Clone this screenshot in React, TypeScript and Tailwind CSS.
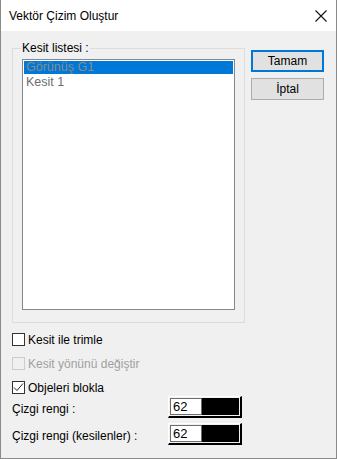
import React from "react";

export default function App() {
  // dialog rows
  const items = ["Görünüş G1", "Kesit 1"];

  const colorField = (value: string) => (
    <div className="w-[74px] h-[22px] border-t border-l border-white border-b-2 border-r-2 border-b-black border-r-black p-[1px] flex">
      <div className="w-[32px] h-full bg-white border border-[#6d6d6d] flex items-center pl-[2px] text-[13px] text-black">
        {value}
      </div>
      <div className="flex-1 h-full bg-black" />
    </div>
  );

  return (
    <div
      className="w-[337px] h-[459px] bg-[#f0f0f0] border-x border-b border-[#8a8a8a] flex flex-col text-[12px] text-black"
      style={{ fontFamily: '"Liberation Sans", Arial, sans-serif' }}
    >
      {/* title bar */}
      <div className="h-[31px] bg-white flex items-center justify-between pl-[8px] pr-[9px] shrink-0">
        <span className="text-[12px]">Vektör Çizim Oluştur</span>
        <svg width="12" height="12" viewBox="0 0 12 12">
          <path d="M0.5 0.5 L11.5 11.5 M11.5 0.5 L0.5 11.5" stroke="#111" strokeWidth="1.1" />
        </svg>
      </div>

      <div className="flex-1 pl-[11px] pt-[17px]">
        <div className="flex gap-[6px]">
          {/* group box */}
          <div className="w-[233px] h-[275px] border border-[#dcdcdc]">
            <div className="-mt-[8px] ml-[8px] px-[1px] w-fit bg-[#f0f0f0] leading-[14px]">Kesit listesi :</div>
            <div className="ml-[9px] mt-[4px] w-[213px] h-[251px] bg-white border border-[#828790] p-[1px]">
              {items.map((it, i) => (
                <div
                  key={it}
                  className={
                    "h-[13px] leading-[13px] pl-[2px] text-[12.5px] " +
                    (i === 0 ? "bg-[#0078d7] text-[#8a8a8a]" : "text-[#6d6d6d] mt-[2px]")
                  }
                >
                  {it}
                </div>
              ))}
            </div>
          </div>

          {/* buttons */}
          <div className="flex flex-col gap-[6px] pt-[2px]">
            <button className="w-[73px] h-[22px] bg-[#e1e1e1] border-2 border-[#0078d7] text-[12px] leading-none">
              Tamam
            </button>
            <button className="w-[73px] h-[22px] bg-[#e1e1e1] border border-[#adadad] text-[12px] leading-none">
              İptal
            </button>
          </div>
        </div>

        {/* checkboxes */}
        <div className="flex flex-col gap-[11px] mt-[10px]">
          <div className="flex items-center gap-[3px] h-[13px]">
            <div className="w-[13px] h-[13px] border border-[#333] bg-white" />
            <span>Kesit ile trimle</span>
          </div>
          <div className="flex items-center gap-[3px] h-[13px]">
            <div className="w-[13px] h-[13px] border border-[#cccccc] bg-[#f0f0f0]" />
            <span className="text-[#a0a0a0]">Kesit yönünü değiştir</span>
          </div>
          <div className="flex items-center gap-[3px] h-[13px]">
            <div className="w-[13px] h-[13px] border border-[#333] bg-white flex items-center justify-center">
              <svg width="11" height="11" viewBox="0 0 11 11">
                <path d="M1 5.5 L4 8.5 L10 1.5" stroke="#222" strokeWidth="1" fill="none" />
              </svg>
            </div>
            <span>Objeleri blokla</span>
          </div>
        </div>

        {/* colour rows */}
        <div className="flex flex-col gap-[5px] mt-[2px]">
          <div className="flex items-center">
            <span className="w-[145px] pt-[3px]">Çizgi rengi :</span>
            <div className="ml-[11px]">{colorField("62")}</div>
          </div>
          <div className="flex items-center">
            <span className="w-[145px] pt-[3px]">Çizgi rengi (kesilenler) :</span>
            <div className="ml-[11px]">{colorField("62")}</div>
          </div>
        </div>
      </div>
    </div>
  );
}
